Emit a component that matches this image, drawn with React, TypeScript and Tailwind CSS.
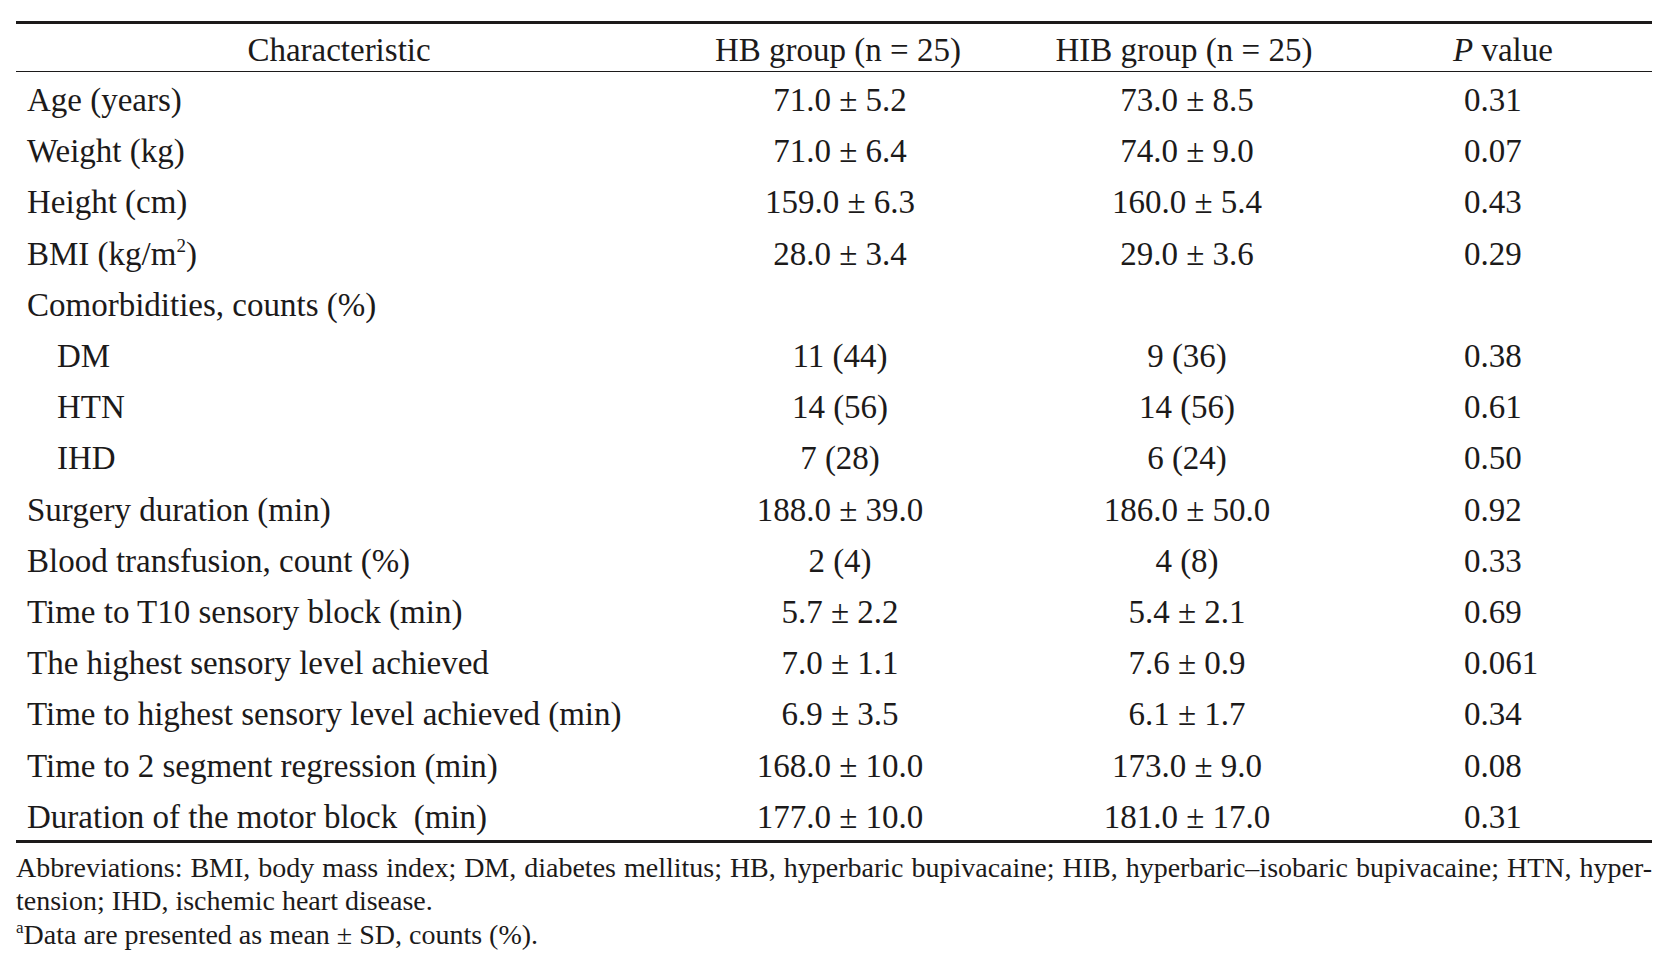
const rows: { label: string; hb: string; hib: string; p: string; indent?: boolean; sup?: boolean }[] = [
  { label: "Age (years)", hb: "71.0 ± 5.2", hib: "73.0 ± 8.5", p: "0.31" },
  { label: "Weight (kg)", hb: "71.0 ± 6.4", hib: "74.0 ± 9.0", p: "0.07" },
  { label: "Height (cm)", hb: "159.0 ± 6.3", hib: "160.0 ± 5.4", p: "0.43" },
  { label: "BMI (kg/m", hb: "28.0 ± 3.4", hib: "29.0 ± 3.6", p: "0.29", sup: true },
  { label: "Comorbidities, counts (%)", hb: "", hib: "", p: "" },
  { label: "DM", hb: "11 (44)", hib: "9 (36)", p: "0.38", indent: true },
  { label: "HTN", hb: "14 (56)", hib: "14 (56)", p: "0.61", indent: true },
  { label: "IHD", hb: "7 (28)", hib: "6 (24)", p: "0.50", indent: true },
  { label: "Surgery duration (min)", hb: "188.0 ± 39.0", hib: "186.0 ± 50.0", p: "0.92" },
  { label: "Blood transfusion, count (%)", hb: "2 (4)", hib: "4 (8)", p: "0.33" },
  { label: "Time to T10 sensory block (min)", hb: "5.7 ± 2.2", hib: "5.4 ± 2.1", p: "0.69" },
  { label: "The highest sensory level achieved", hb: "7.0 ± 1.1", hib: "7.6 ± 0.9", p: "0.061" },
  { label: "Time to highest sensory level achieved (min)", hb: "6.9 ± 3.5", hib: "6.1 ± 1.7", p: "0.34" },
  { label: "Time to 2 segment regression (min)", hb: "168.0 ± 10.0", hib: "173.0 ± 9.0", p: "0.08" },
  { label: "Duration of the motor block \u00a0(min)", hb: "177.0 ± 10.0", hib: "181.0 ± 17.0", p: "0.31" },
];

const cols = "grid grid-cols-[646px_352px_340px_298px]";

function App() {
  return (
    <div className="min-h-screen w-[1671px] bg-white text-[#1c1a1a] font-['Liberation_Serif',serif] pt-[21px] pl-[16px]">
      <div className="w-[1636px]">
        {/* table */}
        <div className="border-t-[3px] border-b-[3px] border-[#1c1a1a]">
          <div className={`${cols} h-[48px] items-center pt-[2px] text-[33px] border-b-[1.5px] border-[#1c1a1a]`}>
            <div className="text-center">Characteristic</div>
            <div className="text-center">HB group (n = 25)</div>
            <div className="text-center">HIB group (n = 25)</div>
            <div className="text-center">
              <span className="italic">P</span> value
            </div>
          </div>
          {rows.map((r, i) => (
            <div key={i} className={`${cols} h-[51.2px] items-center pt-[6px] text-[33px] leading-none`}>
              <div className={r.indent ? "pl-[41px]" : "pl-[11px]"}>
                {r.label}
                {r.sup && (
                  <>
                    <sup className="text-[19px] top-[-13px]">2</sup>)
                  </>
                )}
              </div>
              <div className="text-center pl-[4px]">{r.hb}</div>
              <div className="text-center pl-[6px]">{r.hib}</div>
              <div className="pl-[110px]">{r.p}</div>
            </div>
          ))}
        </div>

        {/* footnotes */}
        <div className="text-[28px] leading-[33.5px] pt-[8px]">
          <p className="text-justify [text-align-last:justify]">
            Abbreviations: BMI, body mass index; DM, diabetes mellitus; HB, hyperbaric bupivacaine; HIB, hyperbaric–isobaric bupivacaine; HTN, hyper-
          </p>
          <p>tension; IHD, ischemic heart disease.</p>
          <p>
            <sup className="text-[17px] top-[-11px]">a</sup>Data are presented as mean ± SD, counts (%).
          </p>
        </div>
      </div>
    </div>
  );
}

export default App;
